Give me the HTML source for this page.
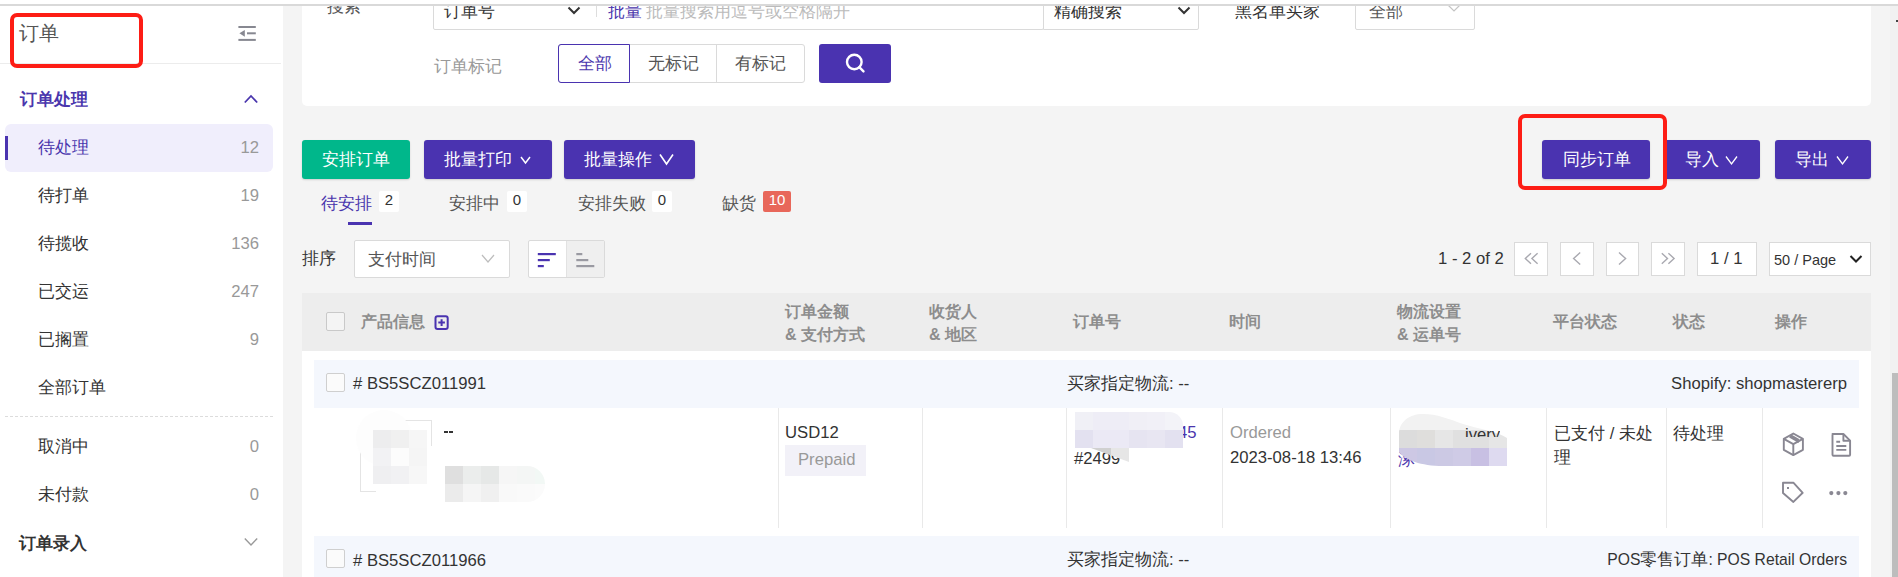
<!DOCTYPE html>
<html><head><meta charset="utf-8">
<style>
*{box-sizing:border-box;margin:0;padding:0}
html,body{width:1898px;height:577px;overflow:hidden}
body{position:relative;background:#f4f4f4;font-family:"Liberation Sans",sans-serif;font-size:16.67px;color:#333}
.a{position:absolute}
.t{position:absolute;line-height:30px;white-space:nowrap}
.g{color:#999}
.p{color:#4a36ad}
.box{position:absolute;border:1px solid #dadada;background:#fff}
.btn{position:absolute;background:#4a33b0;border-radius:3px;box-shadow:0 1px 2px rgba(0,0,0,.15)}
.vl{position:absolute;width:1px;background:#e9e9e9}
.cb{position:absolute;width:19px;height:19px;border:1px solid #cfcfcf;border-radius:2px;background:#fafafa}
.red{position:absolute;border:4.5px solid #fd1d15;border-radius:7px}
.bd{position:absolute;height:21px;border-radius:2px;background:#fff;font-size:15px;line-height:18px;text-align:center;color:#333}
.th{position:absolute;font-weight:bold;color:#8d8d8d;font-size:16px;white-space:nowrap}
</style></head><body>

<!-- SIDEBAR -->
<div class="a" style="left:0;top:0;width:283px;height:577px;background:#fff"></div>
<div class="a" style="left:0;top:63px;width:281px;height:1px;background:#ececec"></div>
<div class="t" style="left:19px;top:18px;font-size:19.5px;color:#555">订单</div>
<svg class="a" style="left:236px;top:24px" width="22" height="20" viewBox="0 0 22 20">
 <rect x="2.4" y="2" width="17.4" height="2" fill="#878891"/>
 <rect x="11" y="8.3" width="8.8" height="2" fill="#878891"/>
 <rect x="2.4" y="14.9" width="17.4" height="2" fill="#878891"/>
 <path d="M8.8 5.9 L3.4 9.3 L8.8 12.8 Z" fill="#878891"/>
</svg>

<div class="t" style="left:20px;top:85px;font-weight:bold;color:#4a36ad">订单处理</div>
<svg class="a" style="left:243px;top:93px" width="16" height="12" viewBox="0 0 16 12"><path d="M1.8 9.5 L8 3 L14.2 9.5" fill="none" stroke="#4a36ad" stroke-width="1.8"/></svg>

<div class="a" style="left:5px;top:124px;width:268px;height:48px;background:#f0eefc;border-radius:6px"></div>
<div class="a" style="left:5px;top:136px;width:3px;height:24px;background:#4a33b0"></div>
<div class="t p" style="left:38px;top:133px">待处理</div>
<div class="t g" style="left:200px;top:133px;width:59px;text-align:right">12</div>

<div class="t" style="left:38px;top:181px">待打单</div>
<div class="t g" style="left:200px;top:181px;width:59px;text-align:right">19</div>
<div class="t" style="left:38px;top:229px">待揽收</div>
<div class="t g" style="left:200px;top:229px;width:59px;text-align:right">136</div>
<div class="t" style="left:38px;top:277px">已交运</div>
<div class="t g" style="left:200px;top:277px;width:59px;text-align:right">247</div>
<div class="t" style="left:38px;top:325px">已搁置</div>
<div class="t g" style="left:200px;top:325px;width:59px;text-align:right">9</div>
<div class="t" style="left:38px;top:373px">全部订单</div>
<div class="a" style="left:5px;top:416px;width:268px;height:0;border-top:1px dashed #dcdcdc"></div>
<div class="t" style="left:38px;top:432px">取消中</div>
<div class="t g" style="left:200px;top:432px;width:59px;text-align:right">0</div>
<div class="t" style="left:38px;top:480px">未付款</div>
<div class="t g" style="left:200px;top:480px;width:59px;text-align:right">0</div>
<div class="t" style="left:19px;top:529px;font-weight:bold;color:#333">订单录入</div>
<svg class="a" style="left:243px;top:535px" width="16" height="14" viewBox="0 0 16 14"><path d="M1.8 3.5 L8 10 L14.2 3.5" fill="none" stroke="#999" stroke-width="1.4"/></svg>

<div class="red" style="left:9.5px;top:13px;width:133px;height:54.5px"></div>

<!-- MAIN CARD -->
<div class="a" style="left:302px;top:-40px;width:1569px;height:146px;background:#fff;border-radius:5px"></div>

<div class="t" style="left:327px;top:-8px;color:#555">搜索</div>
<div class="box" style="left:433px;top:-8px;width:611px;height:38px;border-radius:2px"></div>
<div class="t" style="left:444px;top:-3px;color:#333">订单号</div>
<svg class="a" style="left:566px;top:4px" width="16" height="12" viewBox="0 0 16 12"><path d="M2.5 3.5 L8 9 L13.5 3.5" fill="none" stroke="#333" stroke-width="2"/></svg>
<div class="a" style="left:596px;top:5px;width:1px;height:12px;background:#ddd"></div>
<div class="t p" style="left:608px;top:-3px">批量</div>
<div class="t" style="left:646px;top:-3px;color:#bbb">批量搜索用逗号或空格隔开</div>
<div class="box" style="left:1043px;top:-8px;width:156px;height:38px;border-radius:0 2px 2px 0"></div>
<div class="t" style="left:1054px;top:-3px;color:#333">精确搜索</div>
<svg class="a" style="left:1176px;top:4px" width="16" height="12" viewBox="0 0 16 12"><path d="M2.5 3.5 L8 9 L13.5 3.5" fill="none" stroke="#333" stroke-width="2"/></svg>
<div class="t" style="left:1235px;top:-3px;color:#333">黑名单买家</div>
<div class="box" style="left:1355px;top:-8px;width:120px;height:38px;border-radius:2px"></div>
<div class="t" style="left:1369px;top:-3px;color:#555">全部</div>
<svg class="a" style="left:1446px;top:3px" width="16" height="12" viewBox="0 0 16 12"><path d="M2 2 L8 8 L14 2" fill="none" stroke="#c4c4c4" stroke-width="1.2"/></svg>

<div class="t g" style="left:434px;top:52px">订单标记</div>
<div class="box" style="left:558px;top:44px;width:247px;height:39px;border-radius:3px"></div>
<div class="a" style="left:558px;top:44px;width:72px;height:39px;border:1px solid #4a33b0;border-radius:3px 0 0 3px"></div>
<div class="a" style="left:716px;top:45px;width:1px;height:37px;background:#dadada"></div>
<div class="t p" style="left:578px;top:49px">全部</div>
<div class="t" style="left:648px;top:49px;color:#555">无标记</div>
<div class="t" style="left:735px;top:49px;color:#555">有标记</div>
<div class="btn" style="left:819px;top:44px;width:72px;height:39px;box-shadow:none"></div>
<svg class="a" style="left:843px;top:52px" width="24" height="22" viewBox="0 0 24 22"><circle cx="11.3" cy="10" r="7.3" fill="none" stroke="#fff" stroke-width="2.4"/><path d="M16.3 15.2 L20.5 19.4" stroke="#fff" stroke-width="2.4" stroke-linecap="round"/></svg>

<!-- TOOLBAR -->
<div class="a" style="left:302px;top:140px;width:108px;height:39px;background:#00b78b;border-radius:3px;box-shadow:0 1px 2px rgba(0,0,0,.15)"></div>
<div class="t" style="left:322px;top:145px;color:#fff">安排订单</div>
<div class="btn" style="left:424px;top:140px;width:128px;height:39px"></div>
<div class="t" style="left:444px;top:145px;color:#fff">批量打印</div>
<svg class="a" style="left:519px;top:154px" width="13" height="12" viewBox="0 0 13 12"><path d="M2 3 L6.5 9 L11 3" fill="none" stroke="#fff" stroke-width="1.5"/></svg>
<div class="btn" style="left:564px;top:140px;width:131px;height:39px"></div>
<div class="t" style="left:584px;top:145px;color:#fff">批量操作</div>
<svg class="a" style="left:658px;top:152px" width="17" height="14" viewBox="0 0 17 14"><path d="M2 2.5 L8.5 12 L15 2.5" fill="none" stroke="#fff" stroke-width="1.6"/></svg>

<div class="btn" style="left:1542px;top:140px;width:108px;height:39px"></div>
<div class="t" style="left:1563px;top:145px;color:#fff">同步订单</div>
<div class="btn" style="left:1664px;top:140px;width:96px;height:39px"></div>
<div class="t" style="left:1685px;top:145px;color:#fff">导入</div>
<svg class="a" style="left:1724px;top:154px" width="15" height="12" viewBox="0 0 15 12"><path d="M2 2.5 L7.5 9.8 L13 2.5" fill="none" stroke="#fff" stroke-width="1.3"/></svg>
<div class="btn" style="left:1775px;top:140px;width:96px;height:39px"></div>
<div class="t" style="left:1795px;top:145px;color:#fff">导出</div>
<svg class="a" style="left:1835px;top:154px" width="15" height="12" viewBox="0 0 15 12"><path d="M2 2.5 L7.5 9.8 L13 2.5" fill="none" stroke="#fff" stroke-width="1.3"/></svg>
<div class="red" style="left:1518px;top:114px;width:149px;height:76px"></div>

<!-- TABS -->
<div class="t p" style="left:321px;top:189px">待安排</div>
<div class="bd" style="left:379px;top:191px;width:20px">2</div>
<div class="a" style="left:348px;top:222px;width:24px;height:3px;background:#4a33b0"></div>
<div class="t" style="left:449px;top:189px;color:#555">安排中</div>
<div class="bd" style="left:507px;top:191px;width:20px">0</div>
<div class="t" style="left:578px;top:189px;color:#555">安排失败</div>
<div class="bd" style="left:652px;top:191px;width:20px">0</div>
<div class="t" style="left:722px;top:189px;color:#555">缺货</div>
<div class="bd" style="left:763px;top:191px;width:28px;background:#e8675a;color:#fff">10</div>

<!-- SORT ROW -->
<div class="t" style="left:302px;top:244px">排序</div>
<div class="box" style="left:354px;top:240px;width:156px;height:38px;border-radius:2px"></div>
<div class="t" style="left:368px;top:245px;color:#555">支付时间</div>
<svg class="a" style="left:480px;top:252px" width="16" height="13" viewBox="0 0 16 13"><path d="M2 3 L8 10 L14 3" fill="none" stroke="#bdbdbd" stroke-width="1.2"/></svg>
<div class="box" style="left:528px;top:240px;width:77px;height:38px;border-radius:2px"></div>
<div class="a" style="left:566px;top:241px;width:38px;height:36px;background:#efefef;border-left:1px solid #e2e2e2"></div>
<svg class="a" style="left:536px;top:250px" width="22" height="20" viewBox="0 0 22 20"><rect x="1.8" y="3" width="18" height="2.2" fill="#4a33b0"/><rect x="1.8" y="9" width="12" height="2.2" fill="#4a33b0"/><rect x="1.8" y="15" width="6" height="2.2" fill="#4a33b0"/></svg>
<svg class="a" style="left:575px;top:250px" width="22" height="20" viewBox="0 0 22 20"><rect x="1.3" y="3" width="6" height="2.2" fill="#9a9aa2"/><rect x="1.3" y="9" width="12" height="2.2" fill="#9a9aa2"/><rect x="1.3" y="15" width="18" height="2.2" fill="#9a9aa2"/></svg>

<div class="t" style="left:1438px;top:244px">1 - 2 of 2</div>
<div class="box" style="left:1514px;top:242px;width:34px;height:34px"></div>
<div class="box" style="left:1560px;top:242px;width:34px;height:34px"></div>
<div class="box" style="left:1606px;top:242px;width:33px;height:34px"></div>
<div class="box" style="left:1651px;top:242px;width:34px;height:34px"></div>
<div class="box" style="left:1697px;top:242px;width:60px;height:34px"></div>
<div class="box" style="left:1769px;top:242px;width:102px;height:34px"></div>
<svg class="a" style="left:1514px;top:242px" width="34" height="34" viewBox="0 0 34 34"><path d="M17 11.2 L11.3 16.5 L17 21.8 M23.6 11.2 L17.9 16.5 L23.6 21.8" fill="none" stroke="#a9a9b0" stroke-width="1.4"/></svg>
<svg class="a" style="left:1560px;top:242px" width="34" height="34" viewBox="0 0 34 34"><path d="M20.2 10.6 L13.6 16.5 L20.2 22.4" fill="none" stroke="#a9a9b0" stroke-width="1.4"/></svg>
<svg class="a" style="left:1606px;top:242px" width="34" height="34" viewBox="0 0 34 34"><path d="M13 10.6 L19.6 16.5 L13 22.4" fill="none" stroke="#a9a9b0" stroke-width="1.4"/></svg>
<svg class="a" style="left:1651px;top:242px" width="34" height="34" viewBox="0 0 34 34"><path d="M10.8 11.2 L16.5 16.5 L10.8 21.8 M17.4 11.2 L23.1 16.5 L17.4 21.8" fill="none" stroke="#a9a9b0" stroke-width="1.4"/></svg>
<div class="t" style="left:1710px;top:244px">1 / 1</div>
<div class="t" style="left:1774px;top:245px;font-size:14.5px">50 / Page</div>
<svg class="a" style="left:1848px;top:253px" width="16" height="12" viewBox="0 0 16 12"><path d="M2.5 3 L8 8.5 L13.5 3" fill="none" stroke="#222" stroke-width="2"/></svg>


<!-- TABLE -->
<div class="a" style="left:302px;top:293px;width:1569px;height:58px;background:#ededed"></div>
<div class="cb" style="left:326px;top:312px;background:#f4f4f4;border-color:#c9c9c9"></div>
<div class="th" style="left:361px;top:307px;line-height:30px">产品信息</div>
<svg class="a" style="left:434px;top:315px" width="15" height="15" viewBox="0 0 15 15"><rect x="1.5" y="1.3" width="12.2" height="12.6" rx="2" fill="none" stroke="#4a33b0" stroke-width="2"/><path d="M7.6 4.3 V10.9 M4.3 7.6 H10.9" stroke="#4a33b0" stroke-width="2"/></svg>
<div class="th" style="left:785px;top:300px;line-height:23px">订单金额<br>&amp; 支付方式</div>
<div class="th" style="left:929px;top:300px;line-height:23px">收货人<br>&amp; 地区</div>
<div class="th" style="left:1073px;top:307px;line-height:30px">订单号</div>
<div class="th" style="left:1229px;top:307px;line-height:30px">时间</div>
<div class="th" style="left:1397px;top:300px;line-height:23px">物流设置<br>&amp; 运单号</div>
<div class="th" style="left:1553px;top:307px;line-height:30px">平台状态</div>
<div class="th" style="left:1673px;top:307px;line-height:30px">状态</div>
<div class="th" style="left:1775px;top:307px;line-height:30px">操作</div>

<div class="a" style="left:302px;top:351px;width:1569px;height:226px;background:#fff"></div>
<div class="a" style="left:314px;top:360px;width:1545px;height:48px;background:#f4f7fd"></div>
<div class="cb" style="left:326px;top:373px;background:#fbfbfb"></div>
<div class="t" style="left:353px;top:369px">#&nbsp;BS5SCZ011991</div>
<div class="t" style="left:1067px;top:369px">买家指定物流: --</div>
<div class="t" style="left:1547px;top:369px;width:300px;text-align:right">Shopify: shopmastererp</div>

<div class="vl" style="left:778px;top:408px;height:120px"></div>
<div class="vl" style="left:922px;top:408px;height:120px"></div>
<div class="vl" style="left:1066px;top:408px;height:120px"></div>
<div class="vl" style="left:1222px;top:408px;height:120px"></div>
<div class="vl" style="left:1390px;top:408px;height:120px"></div>
<div class="vl" style="left:1546px;top:408px;height:120px"></div>
<div class="vl" style="left:1666px;top:408px;height:120px"></div>
<div class="vl" style="left:1762px;top:408px;height:120px"></div>

<div class="t" style="left:785px;top:418px">USD12</div>
<div class="a" style="left:785px;top:445px;width:81px;height:31px;background:#f2f1f8"></div>
<div class="t g" style="left:798px;top:445px">Prepaid</div>

<div class="t p" style="left:1178px;top:418px">45</div>
<div class="t" style="left:1074px;top:444px">#2499</div>

<div class="t g" style="left:1230px;top:418px">Ordered</div>
<div class="t" style="left:1230px;top:443px">2023-08-18 13:46</div>

<div class="a" style="left:1554px;top:422px;width:110px;line-height:24px">已支付 / 未处理</div>
<div class="t" style="left:1673px;top:419px">待处理</div>

<div class="a" style="left:314px;top:536px;width:1545px;height:48px;background:#f4f7fd"></div>
<div class="cb" style="left:326px;top:549px;background:#fbfbfb"></div>
<div class="t" style="left:353px;top:546px">#&nbsp;BS5SCZ011966</div>
<div class="t" style="left:1067px;top:545px">买家指定物流: --</div>
<div class="t" style="left:1447px;top:545px;width:400px;text-align:right;font-size:15.7px">POS<span style="font-size:16.67px">零售订单</span>: POS Retail Orders</div>


<!-- PRODUCT CELL MOSAIC -->
<div class="a" style="left:405px;top:420px;width:27px;height:1px;background:#e4e4e4"></div>
<div class="a" style="left:431px;top:420px;width:1px;height:26px;background:#e4e4e4"></div>
<div class="a" style="left:360px;top:448px;width:1px;height:44px;background:#e4e4e4"></div>
<div class="a" style="left:360px;top:491px;width:16px;height:1px;background:#e4e4e4"></div>
<div class="a" style="left:356px;top:410px;width:56px;height:56px;border-radius:50%;background:#fdfdfd"></div>
<div class="a" style="left:373px;top:430px;width:18px;height:18px;background:#ededee"></div>
<div class="a" style="left:391px;top:430px;width:18px;height:18px;background:#f0f0f0"></div>
<div class="a" style="left:409px;top:430px;width:18px;height:18px;background:#f6f6f6"></div>
<div class="a" style="left:373px;top:448px;width:18px;height:18px;background:#f2f2f4"></div>
<div class="a" style="left:391px;top:448px;width:18px;height:18px;background:#fcfcfc"></div>
<div class="a" style="left:409px;top:448px;width:18px;height:18px;background:#f5f5f5"></div>
<div class="a" style="left:373px;top:466px;width:18px;height:18px;background:#efeff1"></div>
<div class="a" style="left:391px;top:466px;width:18px;height:18px;background:#f1f1f3"></div>
<div class="a" style="left:409px;top:466px;width:18px;height:18px;background:#f7f7f7"></div>
<div class="a" style="left:444px;top:431px;width:4px;height:2px;background:#333"></div><div class="a" style="left:449px;top:431px;width:4px;height:2px;background:#333"></div>
<div class="a" style="left:445px;top:466px;width:100px;height:36px;border-radius:0 20px 20px 0;overflow:hidden">
 <div class="a" style="left:0;top:0;width:18px;height:18px;background:#dfdfdf"></div>
 <div class="a" style="left:18px;top:0;width:18px;height:18px;background:#ebedec"></div>
 <div class="a" style="left:36px;top:0;width:18px;height:18px;background:#e6e8e7"></div>
 <div class="a" style="left:54px;top:0;width:18px;height:18px;background:#f6f6f6"></div>
 <div class="a" style="left:72px;top:0;width:18px;height:18px;background:#f4f6f5"></div>
 <div class="a" style="left:90px;top:0;width:18px;height:18px;background:#f2f8f5"></div>
 <div class="a" style="left:0;top:18px;width:18px;height:18px;background:#ebebeb"></div>
 <div class="a" style="left:18px;top:18px;width:18px;height:18px;background:#f5f5f5"></div>
 <div class="a" style="left:36px;top:18px;width:18px;height:18px;background:#f0f0f0"></div>
 <div class="a" style="left:54px;top:18px;width:18px;height:18px;background:#f9f9f9"></div>
 <div class="a" style="left:72px;top:18px;width:18px;height:18px;background:#fafafa"></div>
 <div class="a" style="left:90px;top:18px;width:18px;height:18px;background:#fbfbfb"></div>
</div>

<!-- ORDER NO MOSAIC -->
<div class="a" style="left:1075px;top:412px;width:108px;height:36px">
 <div class="a" style="left:0;top:0;width:18px;height:18px;background:#f0f0f6"></div>
 <div class="a" style="left:18px;top:0;width:36px;height:18px;background:#eeedf6"></div>
 <div class="a" style="left:54px;top:0;width:18px;height:18px;background:#f0eff6"></div>
 <div class="a" style="left:72px;top:0;width:18px;height:18px;background:#f1f0f7"></div>
 <div class="a" style="left:90px;top:0;width:18px;height:18px;background:#f3f3f8;border-radius:0 14px 0 0"></div>
 <div class="a" style="left:0;top:18px;width:18px;height:18px;background:#e3e1f0"></div>
 <div class="a" style="left:18px;top:18px;width:36px;height:18px;background:#ebe9f5"></div>
 <div class="a" style="left:54px;top:18px;width:18px;height:18px;background:#e6e4f1"></div>
 <div class="a" style="left:72px;top:18px;width:18px;height:18px;background:#e8e6f2"></div>
 <div class="a" style="left:90px;top:18px;width:18px;height:18px;background:#e3e1f0"></div>
</div>
<div class="a" style="left:1091px;top:448px;width:38px;height:14px;background:linear-gradient(90deg,#d0d0d0 0,#d0d0d0 20px,#e6e6e6 20px);clip-path:polygon(0 0,100% 0,100% 100%)"></div>

<!-- LOGISTICS MOSAIC -->
<div class="t p" style="left:1398px;top:445px">涿</div>
<svg class="a" style="left:1395px;top:410px" width="116" height="60" viewBox="0 0 116 60">
 <defs><clipPath id="lc"><path d="M4 24 C4 12 14 4 28 4 C42 4 54 9 68 14 C84 19 104 22 112 28 L112 56 L48 56 C26 56 10 50 4 42 Z"/></clipPath></defs>
 <g clip-path="url(#lc)"><rect x="0" y="0" width="116" height="20" fill="#f2f2f2"/><rect x="4" y="20" width="18" height="18" fill="#dcdcdc"/><rect x="22" y="20" width="18" height="18" fill="#dfdedc"/><rect x="40" y="20" width="18" height="18" fill="#e6e6e6"/><rect x="58" y="20" width="18" height="18" fill="#e0e0e0"/><rect x="76" y="20" width="18" height="18" fill="#e0e0e0"/><rect x="94" y="20" width="18" height="18" fill="#e6e6e6"/><rect x="4" y="38" width="18" height="18" fill="#cdc8e4"/><rect x="22" y="38" width="18" height="18" fill="#c9c8e4"/><rect x="40" y="38" width="18" height="18" fill="#ccc9e4"/><rect x="58" y="38" width="18" height="18" fill="#cfcbe6"/><rect x="76" y="38" width="18" height="18" fill="#c8c0e3"/><rect x="94" y="38" width="18" height="18" fill="#dedaf0"/></g>
</svg>
<div class="t" style="left:1465px;top:420px;height:17px;overflow:hidden;z-index:2">ivery</div>
<!-- ACTION ICONS -->
<svg class="a" style="left:1778px;top:428px" width="80" height="82" viewBox="0 0 80 82" fill="none" stroke="#898792" stroke-width="1.9" stroke-linejoin="round">
 <path d="M15.3 5.5 L24.9 10.8 L24.9 21.8 L15.3 27.1 L5.8 21.8 L5.8 10.8 Z"/>
 <path d="M5.8 10.8 L15.3 16.1 L24.9 10.8 M15.3 16.1 V27.1"/>
 <path d="M11.6 8.7 L19.8 13.3 V14.8 M12.9 7.4 L21.1 12"/>
 <path d="M54.5 6 H65.4 L72.1 12.7 V26.7 Q72.1 27.7 71.1 27.7 H55.5 Q54.5 27.7 54.5 26.7 V7 Q54.5 6 55.5 6 Z"/>
 <path d="M65.4 6 V12.7 H72.1"/>
 <path d="M58.3 13.8 H62.1 M58.3 18 H68.3 M58.3 21.9 H68.3"/>
 <path d="M5 54.8 H15.6 L24.7 64.8 L15.4 73.9 L5 65.1 Z"/>
</svg>
<div class="a" style="left:1787px;top:487px;width:2.2px;height:2.2px;background:#8a8893"></div>
<svg class="a" style="left:1826px;top:488px" width="24" height="10" viewBox="0 0 24 10"><circle cx="5.3" cy="5.1" r="2.1" fill="#8a8893"/><circle cx="12.4" cy="5.1" r="2.1" fill="#8a8893"/><circle cx="19.3" cy="5.1" r="2.1" fill="#8a8893"/></svg>

<!-- SCROLLBAR -->
<div class="a" style="left:1896px;top:20px;width:2px;height:2px;background:#444;z-index:5"></div>
<div class="a" style="left:1890px;top:6px;width:8px;height:571px;background:#f1f1f1"></div>
<div class="a" style="left:1892px;top:373px;width:6px;height:204px;background:#bdbdbd"></div>

<!-- TOP STRIP -->
<div class="a" style="left:0;top:0;width:1898px;height:4px;background:#fff"></div>
<div class="a" style="left:0;top:4px;width:1898px;height:2px;background:#d9d9d9"></div>

</body></html>
